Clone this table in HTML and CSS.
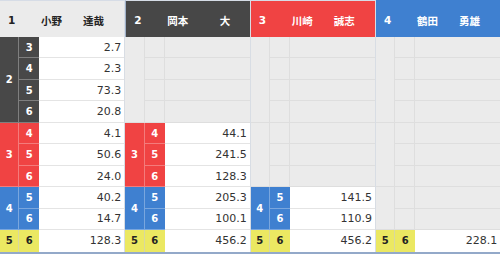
FILE: index.html
```html
<!DOCTYPE html>
<html lang="ja">
<head>
<meta charset="utf-8">
<title>2連単オッズ</title>
<link rel="stylesheet" href="styles.css">
</head>
<body>
<div class="board">
  <section class="group g1">
    <div class="head h-gray"><span class="no">1</span><span class="nm">小野　　達哉</span></div>
    <div class="a dk s4">2</div>
    <div class="b dk">3</div><div class="v">2.7</div>
    <div class="b dk">4</div><div class="v">2.3</div>
    <div class="b dk">5</div><div class="v">73.3</div>
    <div class="b dk">6</div><div class="v">20.8</div>
    <div class="a rd s3">3</div>
    <div class="b rd">4</div><div class="v">4.1</div>
    <div class="b rd">5</div><div class="v">50.6</div>
    <div class="b rd">6</div><div class="v">24.0</div>
    <div class="a bl s2">4</div>
    <div class="b bl">5</div><div class="v">40.2</div>
    <div class="b bl">6</div><div class="v">14.7</div>
    <div class="a yl">5</div>
    <div class="b yl">6</div><div class="v">128.3</div>
  </section>
  <section class="group g2">
    <div class="head h-dark"><span class="no">2</span><span class="nm">岡本　　　大</span></div>
    <div class="a e s4"></div>
    <div class="b e"></div><div class="v e"></div>
    <div class="b e"></div><div class="v e"></div>
    <div class="b e"></div><div class="v e"></div>
    <div class="b e"></div><div class="v e"></div>
    <div class="a rd s3">3</div>
    <div class="b rd">4</div><div class="v">44.1</div>
    <div class="b rd">5</div><div class="v">241.5</div>
    <div class="b rd">6</div><div class="v">128.3</div>
    <div class="a bl s2">4</div>
    <div class="b bl">5</div><div class="v">205.3</div>
    <div class="b bl">6</div><div class="v">100.1</div>
    <div class="a yl">5</div>
    <div class="b yl">6</div><div class="v">456.2</div>
  </section>
  <section class="group g3">
    <div class="head h-red"><span class="no">3</span><span class="nm">川崎　　誠志</span></div>
    <div class="a e s4"></div>
    <div class="b e"></div><div class="v e"></div>
    <div class="b e"></div><div class="v e"></div>
    <div class="b e"></div><div class="v e"></div>
    <div class="b e"></div><div class="v e"></div>
    <div class="a e s3"></div>
    <div class="b e"></div><div class="v e"></div>
    <div class="b e"></div><div class="v e"></div>
    <div class="b e"></div><div class="v e"></div>
    <div class="a bl s2">4</div>
    <div class="b bl">5</div><div class="v">141.5</div>
    <div class="b bl">6</div><div class="v">110.9</div>
    <div class="a yl">5</div>
    <div class="b yl">6</div><div class="v">456.2</div>
  </section>
  <section class="group g4">
    <div class="head h-blue"><span class="no">4</span><span class="nm">鶴田　　勇雄</span></div>
    <div class="a e s4"></div>
    <div class="b e"></div><div class="v e"></div>
    <div class="b e"></div><div class="v e"></div>
    <div class="b e"></div><div class="v e"></div>
    <div class="b e"></div><div class="v e"></div>
    <div class="a e s3"></div>
    <div class="b e"></div><div class="v e"></div>
    <div class="b e"></div><div class="v e"></div>
    <div class="b e"></div><div class="v e"></div>
    <div class="a e s2"></div>
    <div class="b e"></div><div class="v e"></div>
    <div class="b e"></div><div class="v e"></div>
    <div class="a yl">5</div>
    <div class="b yl">6</div><div class="v">228.1</div>
  </section>
</div>
</body>
</html>
```
FILE: styles.css
```css
* { box-sizing: border-box; }
html, body {
  margin: 0;
  padding: 0;
  background: #ffffff;
  overflow: hidden;
}
body {
  width: 500px;
  height: 255px;
  font-family: "DejaVu Sans", Verdana, sans-serif;
}
.board {
  display: grid;
  grid-template-columns: repeat(4, 125.33px);
  width: 502px;
  border-bottom: 2px solid #93a9c9;
}
.group {
  display: grid;
  grid-template-columns: 19.3px 20px 1fr;
  grid-template-rows: 37px repeat(10, 21.47px);
  border-right: 1px solid #d8dde4;
}
.head {
  grid-column: 1 / span 3;
  display: flex;
  align-items: center;
  padding-left: 8px;
  padding-top: 2px;
  border-top: 1px solid #d6dce6;
  font-weight: bold;
  color: #ffffff;
}
.head .no {
  width: 33px;
  font-size: 10.5px;
  font-family: "DejaVu Sans", Verdana, sans-serif;
}
.head .nm {
  font-size: 10.5px;
  font-family: "Noto Sans CJK JP", "Noto Sans", sans-serif;
  letter-spacing: 0;
  white-space: pre;
}
.h-gray { background: #ebebeb; color: #222222; }
.h-dark { background: #474747; border-left: 1px solid #9fb0c8; }
.h-red { background: #f04343; }
.h-blue { background: #3f80d0; border-top-color: #3f80d0; }

.a, .b {
  display: flex;
  align-items: center;
  justify-content: center;
  font-weight: bold;
  font-size: 10px;
  color: #ffffff;
  border-right: 1px solid rgba(255, 255, 255, 0.3);
  border-bottom: 1px solid rgba(255, 255, 255, 0.3);
}
.b { border-right: none; }
.s4 { grid-row: span 4; }
.s3 { grid-row: span 3; }
.s2 { grid-row: span 2; }
.v {
  display: flex;
  align-items: center;
  justify-content: flex-end;
  padding-right: 3px;
  font-size: 11px;
  color: #333333;
  background: #ffffff;
  border-bottom: 1px solid #e4e4e4;
}
.dk { background: #484848; }
.rd { background: #f04343; }
.bl { background: #3f80d0; }
.yl {
  background: #ebe862;
  color: #222222;
  border-color: #d8d8a0;
  border-bottom: none;
}
.g1 .a.yl, .g1 .b.yl { border-bottom: none; }
.v:last-child { border-bottom: none; }
.e {
  background: #ebebeb;
  border-right: 1px solid #dedede;
  border-bottom: 1px solid #dedede;
}
.b.e { border-right: 1px solid #dedede; }
.v.e { border-right: none; }
```
